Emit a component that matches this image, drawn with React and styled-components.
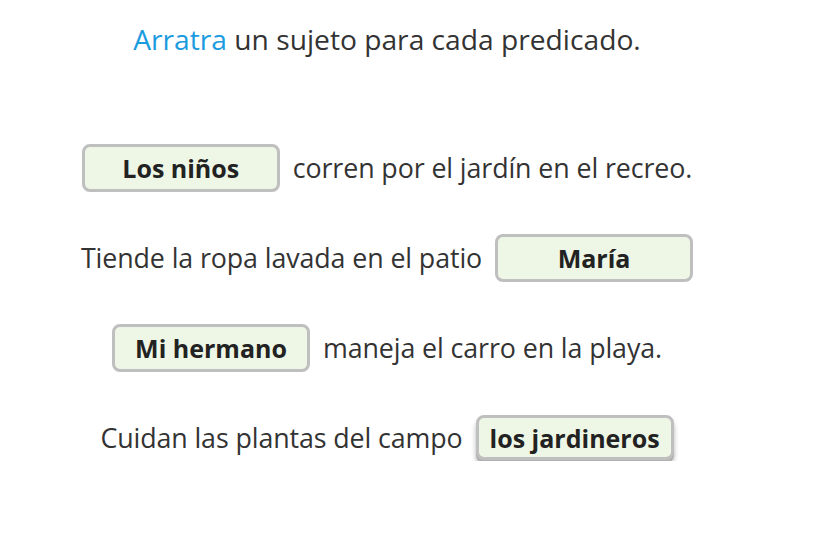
import styled, { createGlobalStyle } from 'styled-components';

const GlobalStyle = createGlobalStyle`
  body {
    margin: 0;
    background: #ffffff;
    font-family: 'Open Sans', 'Noto Sans', sans-serif;
    color: #333333;
  }
`;

const rows = [
  { subject: 'Los niños', predicate: 'corren por el jardín en el recreo.', first: true },
  { subject: 'María', predicate: 'Tiende la ropa lavada en el patio', first: false },
  { subject: 'Mi hermano', predicate: 'maneja el carro en la playa.', first: true },
  { subject: 'los jardineros', predicate: 'Cuidan las plantas del campo', first: false, dragging: true }
];

const App = () => {
  return (
    <>
      <GlobalStyle />
      <Page>
        <Title>
          <Hint>Arratra</Hint> un sujeto para cada predicado.
        </Title>
        <List>
          {rows.map((row) => (
            <Row key={row.subject}>
              {row.first && <Chip $dragging={row.dragging}>{row.subject}</Chip>}
              <Predicate>{row.predicate}</Predicate>
              {!row.first && <Chip $dragging={row.dragging}>{row.subject}</Chip>}
            </Row>
          ))}
        </List>
      </Page>
    </>
  );
};

const Page = styled.div`
  width: 774px;
  padding-top: 18px;
`;

const Title = styled.div`
  text-align: center;
  font-size: 28.2px;
  line-height: 42px;
  color: #333333;
`;

const Hint = styled.span`
  color: #1a9be0;
`;

const List = styled.div`
  display: flex;
  flex-direction: column;
  align-items: center;
  gap: 43px;
  margin-top: 84px;
`;

const Row = styled.div`
  display: flex;
  align-items: center;
  gap: 13px;
  height: 47px;
`;

const Predicate = styled.span`
  font-size: 26.8px;
  letter-spacing: -0.1px;
  color: #333333;
`;

const Chip = styled.div`
  box-sizing: border-box;
  width: 198px;
  height: ${(p) => (p.$dragging ? '45px' : '48px')};
  display: flex;
  align-items: center;
  justify-content: center;
  background: #eef6e5;
  border: 3px solid #bfbfbf;
  border-radius: 8px;
  font-size: 25px;
  font-weight: 700;
  color: #222222;
  box-shadow: ${(p) => (p.$dragging ? '0 3px 0 #b0b0b0, 0 5px 5px rgba(0,0,0,0.3)' : 'none')};
`;

export default App;
